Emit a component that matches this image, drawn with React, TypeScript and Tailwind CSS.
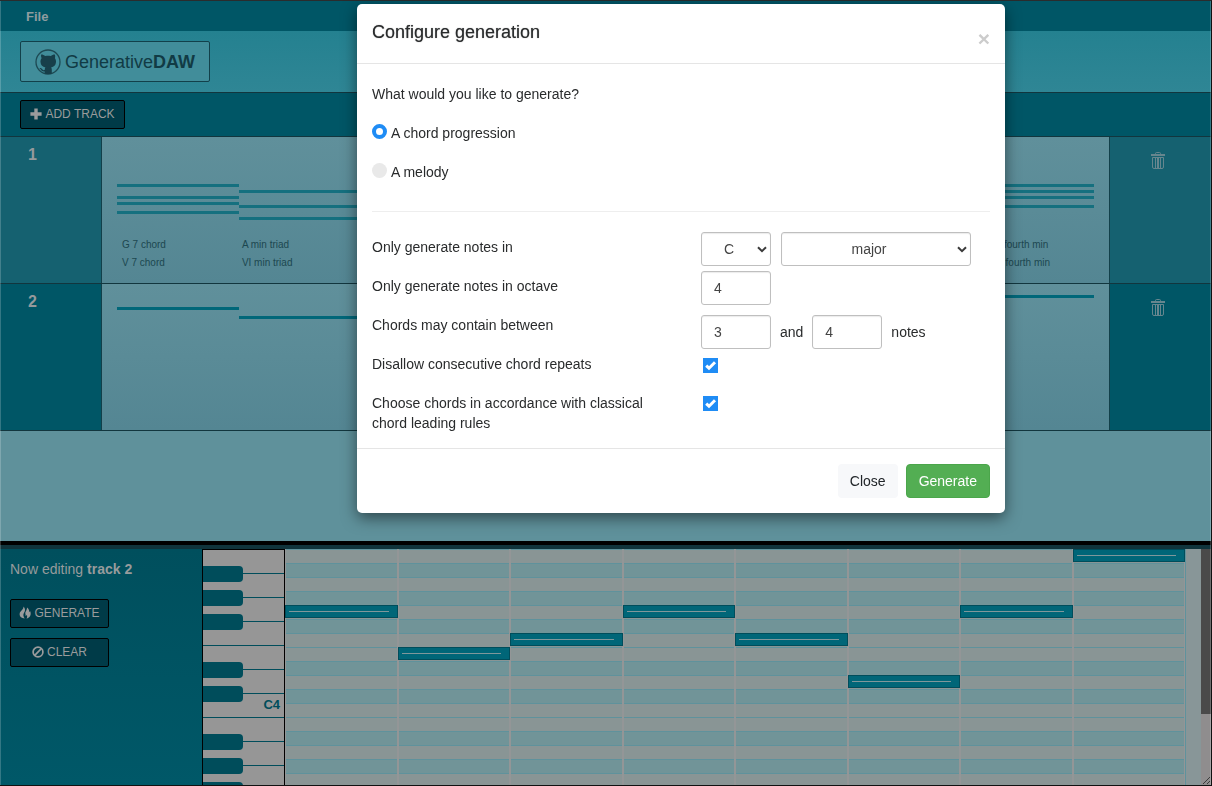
import React from "react";

type Chord = { bars: number[]; labels: string[] };

const CHORDS: Chord[] = [
  { bars: [47, 59, 65, 74], labels: ["G 7 chord", "V 7 chord"] },
  { bars: [53, 68, 80], labels: ["A min triad", "VI min triad"] },
  { bars: [], labels: [] },
  { bars: [], labels: [] },
  { bars: [], labels: [] },
  { bars: [], labels: [] },
  { bars: [], labels: [] },
  { bars: [47, 53, 59, 68], labels: ["E perfect fourth min", "III perfect fourth min"] },
];

const MELODY: Chord[] = [
  { bars: [23], labels: [] },
  { bars: [32], labels: [] },
  { bars: [], labels: [] },
  { bars: [], labels: [] },
  { bars: [], labels: [] },
  { bars: [], labels: [] },
  { bars: [], labels: [] },
  { bars: [11], labels: [] },
];

const ROW_IS_SHARP = [
  false, true, false, true, false, true, false, false, true,
  false, true, false, false, true, false, true, false,
];
const NOTE_ROWS = [4, 7, 6, 4, 6, 9, 4, 0];
const KEYS = [
  { sharp: true }, { sharp: true }, { sharp: true }, { sharp: false },
  { sharp: true }, { sharp: true }, { sharp: false, name: "C4" },
  { sharp: true }, { sharp: true }, { sharp: true },
];

function GithubIcon() {
  return (
    <svg viewBox="0 0 26 26" className="size-[26px]" aria-hidden="true">
      <circle cx="13" cy="13" r="12" fill="#418d9a" stroke="#1d4953" strokeWidth="1.3" />
      <path
        fill="#173f4a"
        d="M6.200 5.600c1.500 0 3 .7 4.100 1.500 1.700-.4 3.700-.4 5.400 0 1.100-.8 2.600-1.500 4.100-1.500.5 1.300.5 2.600.1 3.700.8 1 1.200 2.200 1.100 3.700-.2 3.500-2.100 4.900-4.900 5.400.5.600.7 1.400.7 2.300v3.800a12 12 0 0 1-7.100 0v-2.100c-2.400.3-3.300-.8-3.900-1.900-.3-.6-.8-1-1.500-1.400 1.700-.4 2.500.4 3.200 1.300.6.800 1.200.9 2.200.6.100-1.200.2-2 .7-2.600-2.800-.5-4.700-1.900-4.900-5.400-.1-1.500.3-2.700 1.100-3.700-.4-1.100-.8-2.400-.4-3.700z"
      />
    </svg>
  );
}

function PlusIcon() {
  return (
    <svg viewBox="0 0 12 12" className="size-3" fill="currentColor" aria-hidden="true">
      <path d="M4.300.4h3.400v3.900h3.900v3.400H7.700v3.900H4.300V7.700H.4V4.300h3.900z" />
    </svg>
  );
}

function FireIcon() {
  return (
    <svg viewBox="0 0 12 14" className="h-3.5 w-3" fill="currentColor" aria-hidden="true">
      <path d="M4.500.6c1.500 1.700 1.900 3.400 1.200 4.900-.7 1.500-1.500 2.500-1.300 4.100.1 1.100.5 1.900 1.300 2.900C2.600 12.200.6 10.700.6 8.200c0-2 1.400-2.900 2.600-4.400C4 2.800 4.600 1.700 4.500.6z" />
      <path d="M8.100 1.400c2 1.600 2.300 3.100 1.800 4.900.6-.3 1-.8 1-1.500.8 1.300.9 2.800.6 4.200-.4 1.800-1.900 3.100-3.900 3.700.6-1.100.8-2.300.3-3.600-.3.500-.8.800-1.400.8.300-1-.1-2-.3-2.900C6.600 5.200 8.100 3.700 8.100 1.400z" />
    </svg>
  );
}

function BanIcon() {
  return (
    <svg viewBox="0 0 12 12" className="size-3" fill="none" stroke="currentColor" strokeWidth="1.7" aria-hidden="true">
      <circle cx="6" cy="6" r="4.900" />
      <path d="M2.700 9.300 9.300 2.700" />
    </svg>
  );
}

function TrashIcon() {
  return (
    <svg viewBox="0 0 14 17" className="h-[17px] w-3.5" fill="none" stroke="currentColor" aria-hidden="true">
      <path d="M0 3h14" strokeWidth="2" />
      <path d="M4.500 2.500v-1a1 1 0 0 1 1-1h3a1 1 0 0 1 1 1v1" />
      <path d="M1.500 5.500v9.500a1.500 1.500 0 0 0 1.500 1.500h8a1.500 1.500 0 0 0 1.500-1.500V5.500z" />
      <path d="M4.500 6v10M9.500 6v10" />
      <path d="M7 6v10" strokeWidth="2" />
    </svg>
  );
}

function ToolButton({ icon, children, className = "" }: { icon: React.ReactNode; children: React.ReactNode; className?: string }) {
  return (
    <button
      type="button"
      className={`flex h-[29px] items-center justify-center gap-[3px] rounded-xs border border-black bg-[#003b48] pb-0.5 text-xs text-[#9a9b9c] ${className}`}
    >
      {icon}
      {children}
    </button>
  );
}

function Track({ number, clips, side, bar }: { number: number; clips: Chord[]; side: string; bar: string }) {
  return (
    <section className="flex h-[147px] border-b border-[#12363e]">
      <div className={`w-[102px] shrink-0 border-r border-[#12404a] pt-2 pl-7 text-base leading-5 font-bold text-[#959a9c] ${side}`}>
        {number}
      </div>
      <div className="relative min-w-0 flex-1 bg-linear-to-b from-[#60909b] to-[#548693]">
        <div className="mx-[15px] grid h-full grid-cols-8">
          {clips.map((c, i) => (
            <div key={i} className="relative">
              {c.bars.map((top) => (
                <div key={top} className={`absolute inset-x-0 h-[3px] ${bar}`} style={{ top }} />
              ))}
            </div>
          ))}
        </div>
        <div className="absolute top-[99px] right-7 left-5 grid grid-cols-8 text-[10px] leading-[18px] whitespace-nowrap text-[#1c4750]">
          {clips.map((c, i) => (
            <div key={i}>
              {c.labels.map((l) => (
                <div key={l}>{l}</div>
              ))}
            </div>
          ))}
        </div>
      </div>
      <div className={`flex w-[102px] shrink-0 items-start justify-center border-l border-[#12404a] pt-[15px] pr-1.5 ${side}`}>
        <button type="button" aria-label={`Delete track ${number}`} className="text-[#66868e]">
          <TrashIcon />
        </button>
      </div>
    </section>
  );
}

function PianoRoll() {
  return (
    <div className="flex min-w-0 flex-1 overflow-hidden bg-[#889698]">
      <div className="w-[83px] shrink-0 border-x border-t border-black bg-[#969696]">
        {KEYS.map((k, i) => (
          <div key={i} className="relative flex h-6 items-center justify-end border-b border-[#004d5b] pr-1 pb-0.5 text-[13px] font-bold text-[#004d5b]">
            {k.name}
            {k.sharp && <div className="absolute top-4 left-0 z-10 h-4 w-10 rounded-r bg-[#004d5b]" />}
          </div>
        ))}
      </div>
      <div className="mr-[15px] grid flex-1 grid-cols-8 border-r border-[#5f929c]">
        {NOTE_ROWS.map((note, col) => (
          <div key={col}>
            {ROW_IS_SHARP.map((sharp, row) => (
              <div
                key={row}
                className={`relative h-3.5 border-x border-x-[#939697] ${sharp ? "bg-[#719498]" : "bg-[#899595]"}`}
              >
                <div className="h-px bg-[#5f929c]" />
                {row === note && (
                  <div className="absolute -inset-x-px top-0 flex h-[13px] items-center border border-[#004d5b] bg-[#006678] pr-2 pl-[3px]">
                    <div className="h-px flex-1 bg-[#7f979b]" />
                  </div>
                )}
              </div>
            ))}
          </div>
        ))}
      </div>
      <div className="flex w-[10px] shrink-0 flex-col justify-between bg-[#8f8d8e]">
        <div className="h-[165px] bg-[#4a4a4a]" />
        <svg viewBox="0 0 10 10" className="size-[10px]" stroke="#3b3b3b" fill="none" aria-hidden="true">
          <path d="M2 9 9 2M6 9l3-3" />
        </svg>
      </div>
    </div>
  );
}

const FIELD =
  "h-[34px] rounded-[3px] border border-[#bfbfbf] bg-white text-sm text-[#444] shadow-[inset_0_1px_1px_rgba(0,0,0,0.08)]";

function Dropdown({ id, label, value, className }: { id: string; label: string; value: string; className: string }) {
  return (
    <div className={`relative ${className}`}>
      <select id={id} aria-label={label} className={`w-full appearance-none pr-3.5 text-center ${FIELD}`}>
        <option>{value}</option>
      </select>
      <svg viewBox="0 0 10 7" className="pointer-events-none absolute top-3.5 right-1 h-[7px] w-2.5" fill="none" stroke="#3a3a3a" strokeWidth="2" aria-hidden="true">
        <path d="M1 1.200 5 5.200 9 1.200" />
      </svg>
    </div>
  );
}

function Tick({ id }: { id: string }) {
  return (
    <div className="relative size-[15px]">
      <input id={id} type="checkbox" defaultChecked className="block size-[15px] appearance-none bg-[#e6e6e6] checked:bg-[#1f8cf5]" />
      <svg viewBox="0 0 15 15" className="pointer-events-none absolute inset-0 size-[15px]" fill="none" stroke="#fff" strokeWidth="3" aria-hidden="true">
        <path d="M3.200 7.600 6 10.200 12 4.300" />
      </svg>
    </div>
  );
}

function Radio({ id, label, checked }: { id: string; label: string; checked?: boolean }) {
  return (
    <div className="flex items-start gap-1">
      <input
        id={id}
        type="radio"
        name="kind"
        defaultChecked={checked}
        className="mt-px size-[15px] appearance-none rounded-full bg-[#e9e9e9] checked:border-4 checked:border-[#1f8cf5] checked:bg-white"
      />
      <label htmlFor={id}>{label}</label>
    </div>
  );
}

function GenerationDialog() {
  return (
    <div className="fixed inset-0 flex items-start justify-center overflow-hidden pt-1 pl-[150px]">
      <div
        role="dialog"
        aria-modal="true"
        aria-labelledby="dialog-title"
        className="w-full max-w-[648px] rounded-[5px] bg-white text-sm leading-5 text-[#292b2c] shadow-[0_5px_15px_rgba(0,0,0,0.5)]"
      >
        <header className="flex h-[60px] items-start justify-between border-b border-[#e5e5e5] px-[15px] pt-[15px]">
          <h2 id="dialog-title" className="text-lg leading-[26px] font-medium [text-shadow:0_0_1px_rgba(41,43,44,0.6)]">Configure generation</h2>
          <button type="button" aria-label="Close dialog" className="pt-2.5 text-[21px] leading-5 font-bold text-[#ccc]">×</button>
        </header>
        <div className="px-[15px] pt-5 pb-[15px]">
          <fieldset className="flex flex-col gap-[19px]">
            <legend className="mb-[19px]">What would you like to generate?</legend>
            <Radio id="kind-chords" label="A chord progression" checked />
            <Radio id="kind-melody" label="A melody" />
          </fieldset>
          <hr className="mt-[29px] mb-5 border-[#eee]" />
          <div className="flex">
            <div className="flex w-[329px] shrink-0 flex-col gap-[19px] pt-[5px] pr-10">
              <label htmlFor="key">Only generate notes in</label>
              <label htmlFor="octave">Only generate notes in octave</label>
              <label htmlFor="min-notes">Chords may contain between</label>
              <label htmlFor="no-repeats">Disallow consecutive chord repeats</label>
              <label htmlFor="leading">Choose chords in accordance with classical chord leading rules</label>
            </div>
            <div className="flex flex-1 flex-col">
              <div className="flex gap-2.5">
                <Dropdown id="key" label="Key" value="C" className="w-[70px]" />
                <Dropdown id="scale" label="Scale" value="major" className="w-[190px]" />
              </div>
              <input id="octave" defaultValue="4" className={`mt-[5px] w-[70px] px-3 ${FIELD}`} />
              <div className="mt-2.5 flex items-center gap-[9px]">
                <input id="min-notes" defaultValue="3" className={`w-[70px] px-3 ${FIELD}`} />
                <label htmlFor="max-notes">and</label>
                <input id="max-notes" defaultValue="4" className={`w-[70px] px-3 ${FIELD}`} />
                <span>notes</span>
              </div>
              <div className="mt-[9px] flex flex-col gap-[23px] pl-0.5">
                <Tick id="no-repeats" />
                <Tick id="leading" />
              </div>
            </div>
          </div>
        </div>
        <footer className="flex justify-end gap-2 border-t border-[#e5e5e5] p-[15px]">
          <button type="button" className="h-[34px] rounded bg-[#f7f8fa] px-3 text-[#212529]">Close</button>
          <button type="button" className="h-[34px] rounded border border-[#4ba64b] bg-[#53ae53] px-3 text-white">Generate</button>
        </footer>
      </div>
    </div>
  );
}

export default function App() {
  return (
    <div className="relative flex h-screen flex-col overflow-hidden border-t border-r border-b border-t-[#2a2c2d] border-r-[#111] border-b-[#111] bg-[#5f919b] font-['Liberation_Sans',Arial,sans-serif]">
      <nav className="flex h-[30px] shrink-0 items-center bg-[#005666] px-[26px]">
        <button type="button" className="pt-0.5 text-[13px] font-bold text-[#8f9ca0]">File</button>
      </nav>
      <header className="flex h-[62px] shrink-0 items-center border-b border-[#12363e] bg-linear-to-b from-[#248190] to-[#2f8695] px-5">
        <a href="#" className="flex h-[41px] items-center gap-1 rounded-xs border border-[#12404a] bg-[#418d9a] px-3.5 text-lg text-[#113b45]">
          <GithubIcon />
          <span>Generative<b>DAW</b></span>
        </a>
      </header>
      <div className="flex h-11 shrink-0 items-center border-b border-[#12363e] bg-[#005666] px-5">
        <ToolButton icon={<PlusIcon />} className="w-[105px]">ADD TRACK</ToolButton>
      </div>
      <main className="min-h-0 flex-1">
        <Track number={1} clips={CHORDS} side="bg-[#156170]" bar="bg-[#15707f]" />
        <Track number={2} clips={MELODY} side="bg-[#005666]" bar="bg-[#006779]" />
      </main>
      <div className="h-2 shrink-0 border-t-4 border-black bg-[#10343c]" />
      <section className="flex h-[236px] shrink-0">
        <aside className="flex w-[202px] shrink-0 flex-col items-start bg-linear-to-b from-[#004f5d] to-[#005868] px-2.5 pt-2.5 text-sm leading-5 text-[#979b9c]">
          <p>Now editing <b>track 2</b></p>
          <ToolButton icon={<FireIcon />} className="mt-5 w-[99px]">GENERATE</ToolButton>
          <ToolButton icon={<BanIcon />} className="mt-2.5 w-[99px]">CLEAR</ToolButton>
        </aside>
        <PianoRoll />
      </section>
      <div className="pointer-events-none absolute inset-0 border-x border-white/20" />
      <GenerationDialog />
    </div>
  );
}
